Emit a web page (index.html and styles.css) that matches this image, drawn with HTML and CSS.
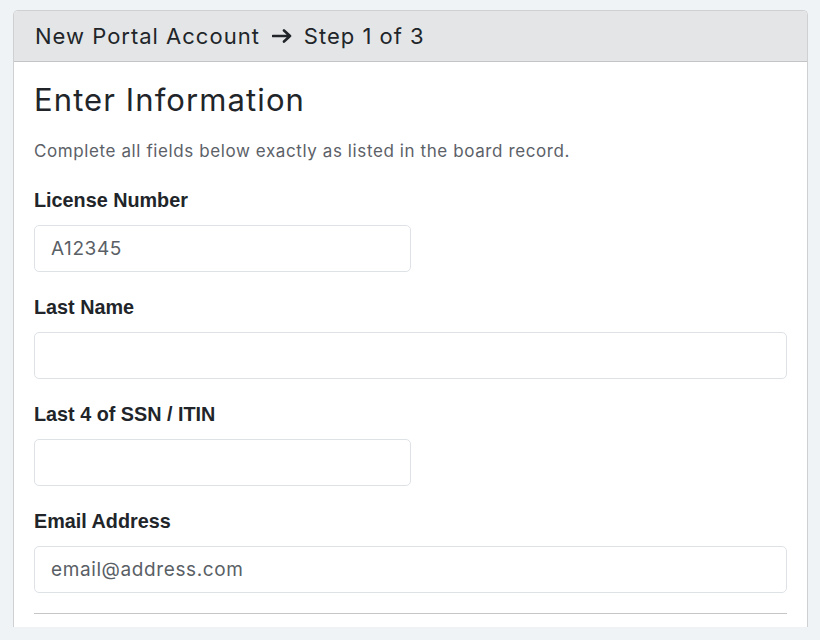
FILE: index.html
```html
<!DOCTYPE html>
<html lang="en">
<head>
    <meta charset="UTF-8">
    <meta name="viewport" content="width=device-width, initial-scale=1.0">
    <title>New Portal Account - Step 1 of 3</title>
    <link rel="stylesheet" href="styles.css">
</head>
<body>
    <div class="card">
        <div class="card-header">
            <span>New Portal Account</span>
            <svg class="arrow" width="20" height="14" viewBox="0 0 20 14" aria-hidden="true">
                <path d="M1 7 H18 M12 1.5 L18 7 L12 12.5" fill="none" stroke="#212529" stroke-width="2.6" stroke-linecap="round" stroke-linejoin="round"/>
            </svg>
            <span>Step 1 of 3</span>
        </div>

        <div class="card-body">
            <h1 class="title">Enter Information</h1>
            <p class="intro">Complete all fields below exactly as listed in the board record.</p>

            <form class="account-form">
                <div class="field">
                    <label for="license">License Number</label>
                    <input id="license" class="input half" type="text" value="A12345">
                </div>
                <div class="field">
                    <label for="last-name">Last Name</label>
                    <input id="last-name" class="input" type="text">
                </div>
                <div class="field">
                    <label for="ssn">Last 4 of SSN / ITIN</label>
                    <input id="ssn" class="input half" type="text">
                </div>
                <div class="field field-last">
                    <label for="email">Email Address</label>
                    <input id="email" class="input" type="email" placeholder="email@address.com">
                </div>
                <hr class="divider">
            </form>
        </div>
    </div>
</body>
</html>
```

FILE: styles.css
```css
body {
    margin: 0;
    padding: 10px 12px 0 13px;
    background-color: #f0f3f6;
    font-family: Inter, 'Open Sans', sans-serif;
    color: #212529;
}

.card {
    width: 795px;
    height: 617px;
    box-sizing: border-box;
    overflow: hidden;
    background-color: #fff;
    border: 1px solid #cfd0d2;
    border-bottom: 0;
    border-radius: 5px 5px 0 0;
}

.card-header {
    display: flex;
    align-items: center;
    gap: 12px;
    height: 50px;
    padding: 0 21px;
    background-color: #e4e5e7;
    border-bottom: 1px solid #c3c4c6;
    font-size: 22px;
    letter-spacing: 1px;
    color: #212529;
}

.arrow {
    flex: none;
}

.card-body {
    padding: 0 20px;
}

.title {
    margin: 18px 0 0;
    font-size: 31px;
    line-height: 40px;
    font-weight: 400;
    letter-spacing: 1.1px;
}

.intro {
    margin: 20px 0 0;
    font-size: 17px;
    line-height: 22px;
    letter-spacing: 0.6px;
    color: #5c6168;
}

.account-form {
    margin-top: 26px;
}

.field {
    display: flex;
    flex-direction: column;
    align-items: flex-start;
    margin-bottom: 23px;
}

.field-last {
    margin-bottom: 20px;
}

.field label {
    font-family: 'Liberation Sans', Arial, sans-serif;
    font-weight: 700;
    font-size: 19.8px;
    line-height: 24px;
    color: #212529;
    margin-bottom: 13px;
}

.input {
    box-sizing: border-box;
    width: 100%;
    height: 47px;
    padding: 0 16px;
    border: 1px solid #dee2e6;
    border-radius: 5px;
    background-color: #fff;
    font-family: Inter, 'Open Sans', sans-serif;
    font-size: 19px;
    letter-spacing: 0.6px;
    color: #5a5f66;
    outline: none;
}

.input::placeholder {
    color: #5a5f66;
}

.input.half {
    width: 50%;
}

.divider {
    margin: 0;
    border: 0;
    border-top: 1px solid #c6c6c6;
}
```
